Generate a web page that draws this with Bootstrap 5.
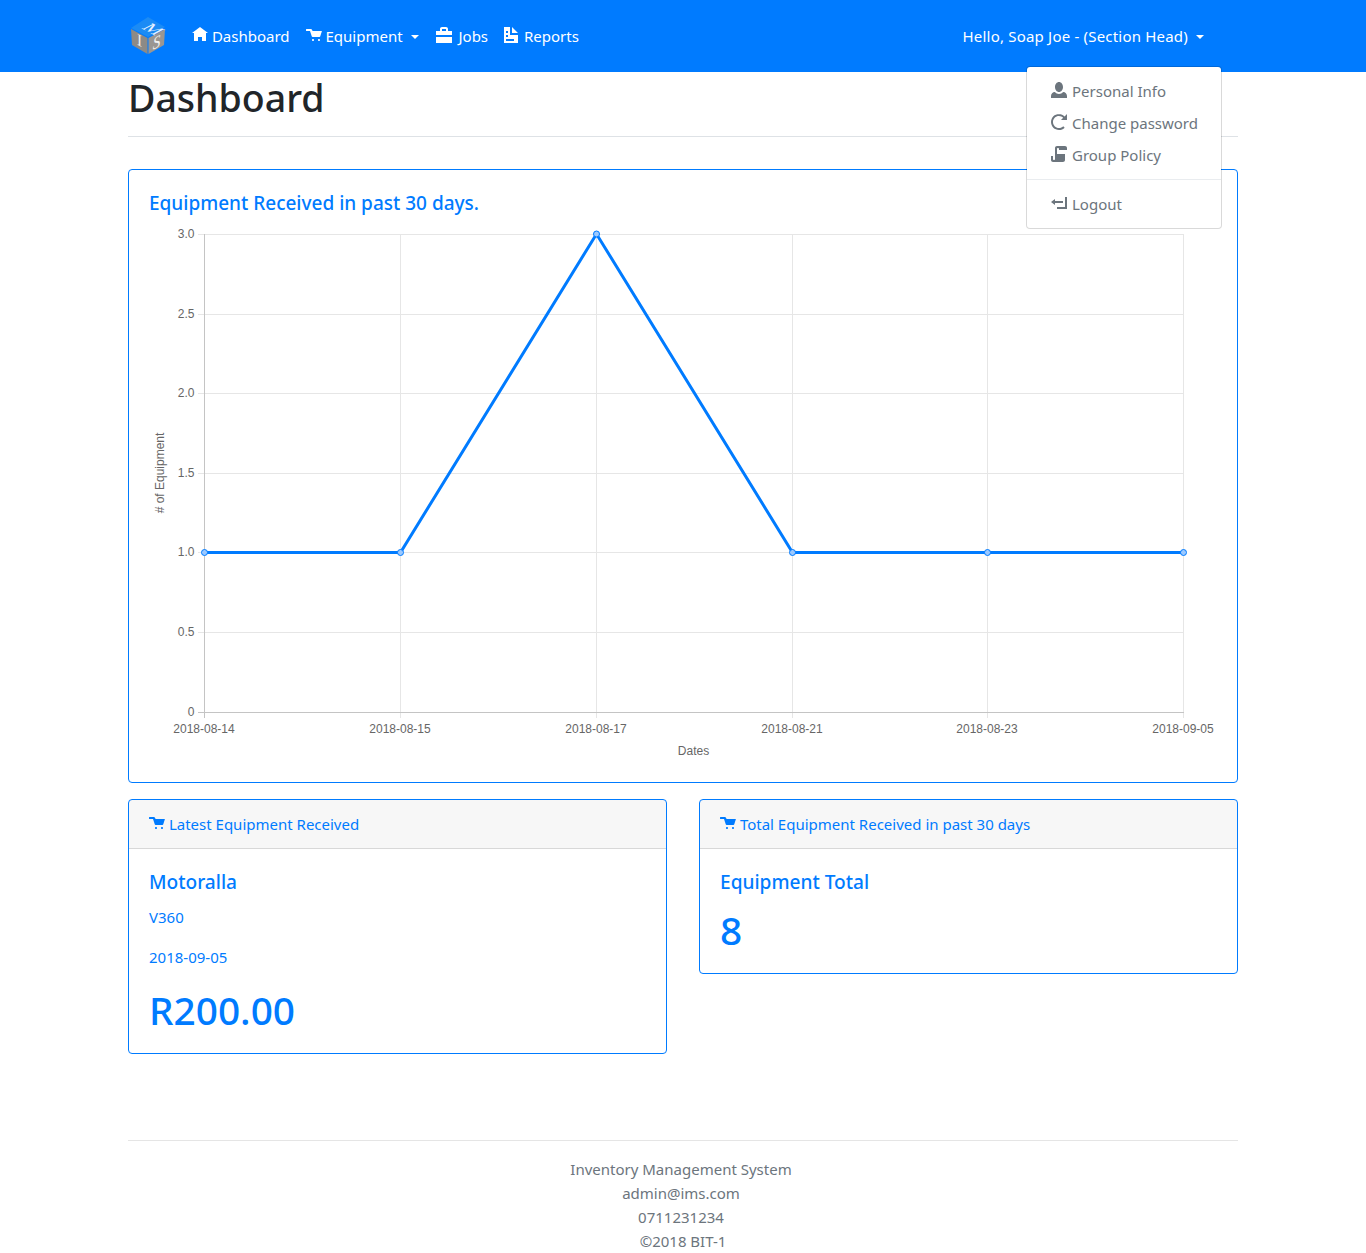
<!DOCTYPE html>
<html lang="en">
<head>
<meta charset="utf-8">
<title>Dashboard</title>
<link href="https://cdn.jsdelivr.net/npm/bootstrap@5.3.0/dist/css/bootstrap.min.css" rel="stylesheet">
<style>
:root{--ims-blue:#007bff;}
body{font-family:"Noto Sans","Open Sans",sans-serif;font-size:15px;line-height:24px;color:#212529;}
.shell{--bs-gutter-x:30px;}
.shell .row{--bs-gutter-x:32px;}
.topbar{background:var(--ims-blue);height:72px;padding:0;}
.topbar .nav-link{color:#fff;padding:8px;white-space:nowrap;font-size:15px;line-height:24px;}
.topbar .nav-link:hover,.topbar .nav-link:focus,.topbar .nav-link.show{color:#fff;}
.topbar .dropdown-toggle::after{font-size:16px;margin-left:8px;margin-right:1px;vertical-align:3px;}
.user-nav{margin-right:25px;}
.user-nav .nav-link{letter-spacing:.2px;}
.brand-box{width:40px;height:40px;margin-right:16px;display:block;}
.ico{width:16px;height:16px;fill:currentColor;vertical-align:-1px;}
.ico-cart{vertical-align:-3px;}
.ico-jobs{margin-right:3px;}
.user-menu{position:absolute;top:50px;right:-9px;left:auto;min-width:0;margin:0;padding:8px 0;border-radius:4px;border-color:rgba(0,0,0,.15);display:block;font-size:15px;letter-spacing:0;}
.user-menu .dropdown-item{color:#6c757d;padding:4px 23px 4px 24px;line-height:24px;}
.user-menu .ico{margin-right:1px;}
.user-menu .dropdown-divider{margin:8px 0;border-color:#e9ecef;opacity:1;}
.page-head{margin-top:2px;padding-bottom:14px;border-bottom:1px solid #dee2e6;margin-bottom:32px;}
.page-head h1{font-size:37.5px;font-weight:500;line-height:48px;margin:0;}
.blue-card{border:1px solid var(--ims-blue);border-radius:4px;color:var(--ims-blue);--bs-card-border-radius:4px;--bs-card-inner-border-radius:3px;}
.blue-card .card-body{padding:20px;}
.blue-card .card-header{padding:12px 20px;background:rgba(0,0,0,.03);border-bottom:1px solid rgba(0,0,0,.125);}
.blue-card h5{font-size:19.1px;font-weight:500;line-height:26px;margin:0 0 10px;}
.blue-card h5.chart-title{font-size:19px;margin-bottom:6px;}
.blue-card p{margin:0 0 16px;}
.blue-card h1{font-size:38.8px;font-weight:500;line-height:50px;margin:0 0 -2px;}
.chart-svg{display:block;width:1068px;height:540px;}
.chart-svg text{font-family:"Liberation Sans",Arial,sans-serif;font-size:12px;fill:#666;}
.grid-line{stroke:#e6e6e6;stroke-width:1;}
.axis-line{stroke:#c4c4c4;stroke-width:1;}
.site-foot{margin-top:86px;border-top:1px solid rgba(0,0,0,.1);padding-top:16px;text-align:center;color:#6c757d;}
.site-foot div{padding-right:4px;}
.site-foot div:last-child{padding-right:0;}
</style>
</head>
<body>
<nav class="navbar navbar-expand-lg topbar">
  <div class="container shell">
    <a class="navbar-brand p-0 m-0" href="#">
      <svg class="brand-box" viewBox="128 16 40 40" role="img" aria-label="IMS logo">
        <polygon points="148,17 165,27 148,37 131,28" fill="#1b8bf5"/>
        <polygon points="131,29 147.500,38 147.500,54 132,45" fill="#8d8a86"/>
        <polygon points="165,29 148.500,38 148.500,54 164,45" fill="#9a9692"/>
        <text transform="matrix(.8 .42 -.8 .42 148 32)" text-anchor="middle" font-family="Liberation Serif,serif" font-size="20" fill="#e8f2ff">M</text>
        <text transform="matrix(.9 .5 0 1 139.500 46)" text-anchor="middle" font-family="Liberation Serif,serif" font-size="17" fill="#f1f1f1">I</text>
        <text transform="matrix(.9 -.5 0 1 156.500 48)" text-anchor="middle" font-family="Liberation Serif,serif" font-size="17" font-style="italic" fill="#f1f1f1">S</text>
      </svg>
    </a>
    <ul class="navbar-nav flex-row me-auto">
      <li class="nav-item"><a class="nav-link" href="#"><svg class="ico" viewBox="0 0 8 8"><path d="M4 0l-4 3h1v4h2v-2h2v2h2v-4.030l1 .03-4-3z"/></svg> Dashboard</a></li>
      <li class="nav-item"><a class="nav-link dropdown-toggle" href="#"><svg class="ico ico-cart" viewBox="0 0 8 8"><path d="M.34 0a.5.5 0 0 0 .16 1h1.500l.09.25.41 1.250.41 1.250c.04.13.21.25.34.25h3.500c.14 0 .3-.12.34-.25l.81-2.500c.04-.13-.02-.25-.16-.25h-4.440l-.38-.72a.5.5 0 0 0-.44-.28h-2a.5.5 0 0 0-.09 0 .5.5 0 0 0-.06 0zm3.160 5c-.28 0-.5.22-.5.5s.22.5.5.5.5-.22.5-.5-.22-.5-.5-.5zm3 0c-.28 0-.5.22-.5.5s.22.5.5.5.5-.22.5-.5-.22-.5-.5-.5z"/></svg> Equipment</a></li>
      <li class="nav-item"><a class="nav-link" href="#"><svg class="ico ico-jobs" viewBox="0 0 8 8"><path d="M3 0c-.55 0-1 .45-1 1v1h-1.910l-.03.03a1 1 0 0 0-.06.03v1.910h8v-1.910a.5.5 0 0 0-.09-.03l-.03-.03h-1.880v-1c0-.55-.45-1-1-1h-2zm0 1h2v1h-2v-1zm-3 4v3h8v-3h-8z"/></svg> Jobs</a></li>
      <li class="nav-item"><a class="nav-link" href="#"><svg class="ico" viewBox="0 0 8 8"><path d="M0 0v8h7v-4h-4v-4h-3zm4 0v3h3l-3-3zm-3 2h1v1h-1v-1zm0 2h1v1h-1v-1zm0 2h4v1h-4v-1z"/></svg> Reports</a></li>
    </ul>
    <ul class="navbar-nav flex-row user-nav">
      <li class="nav-item dropdown position-relative">
        <a class="nav-link dropdown-toggle show" href="#">Hello, Soap Joe - (Section Head)</a>
        <div class="dropdown-menu show user-menu">
          <a class="dropdown-item" href="#"><svg class="ico" viewBox="0 0 8 8"><path d="M4 0c-1.100 0-2 1.120-2 2.500s.9 2.500 2 2.500 2-1.120 2-2.500-.9-2.500-2-2.500zm-2.090 5c-1.060.05-1.910.92-1.910 2v1h8v-1c0-1.080-.84-1.950-1.910-2-.54.61-1.280 1-2.090 1-.81 0-1.550-.39-2.090-1z"/></svg> Personal Info</a>
          <a class="dropdown-item" href="#"><svg class="ico" viewBox="0 0 8 8"><path d="M4 0c-2.200 0-4 1.800-4 4s1.800 4 4 4c1.100 0 2.120-.43 2.840-1.160l-.72-.72c-.54.54-1.290.88-2.130.88-1.660 0-3-1.340-3-3s1.340-3 3-3c.83 0 1.550.36 2.090.91l-1.090 1.090h3v-3l-1.190 1.190c-.72-.72-1.710-1.190-2.810-1.190z"/></svg> Change password</a>
          <a class="dropdown-item" href="#"><svg class="ico" viewBox="0 0 8 8"><path d="M3 0c-.55 0-1 .45-1 1v5.500c0 .28-.22.5-.5.5s-.5-.22-.5-.5v-1.500h-1v2c0 .55.45 1 1 1h5c.55 0 1-.45 1-1v-3h-4v-2.500c0-.28.22-.5.5-.5s.5.22.5.5v.5h4v-1c0-.55-.45-1-1-1h-4z"/></svg> Group Policy</a>
          <div class="dropdown-divider"></div>
          <a class="dropdown-item" href="#"><svg class="ico" viewBox="0 0 8 8"><path d="M3 0v1h4v5h-4v1h5v-6h-5zm-1 2l-2 1.500 2 1.500v-1h4v-1h-4v-1z"/></svg> Logout</a>
        </div>
      </li>
    </ul>
  </div>
</nav>

<main class="container shell">
  <div class="page-head"><h1>Dashboard</h1></div>

  <div class="card blue-card mb-3">
    <div class="card-body">
      <h5 class="chart-title">Equipment Received in past 30 days.</h5>
      <svg class="chart-svg" viewBox="149 222 1068 540" role="img" aria-label="Line chart of equipment received">
        <g class="grids">
          <line class="grid-line" x1="198" x2="1184" y1="234.500" y2="234.500"/>
          <line class="grid-line" x1="198" x2="1184" y1="314.500" y2="314.500"/>
          <line class="grid-line" x1="198" x2="1184" y1="393.500" y2="393.500"/>
          <line class="grid-line" x1="198" x2="1184" y1="473.500" y2="473.500"/>
          <line class="grid-line" x1="198" x2="1184" y1="552.500" y2="552.500"/>
          <line class="grid-line" x1="198" x2="1184" y1="632.500" y2="632.500"/>
          <line class="grid-line" x1="400.500" x2="400.500" y1="234" y2="718"/>
          <line class="grid-line" x1="596.500" x2="596.500" y1="234" y2="718"/>
          <line class="grid-line" x1="792.500" x2="792.500" y1="234" y2="718"/>
          <line class="grid-line" x1="987.500" x2="987.500" y1="234" y2="718"/>
          <line class="grid-line" x1="1183.500" x2="1183.500" y1="234" y2="718"/>
          <line class="axis-line" x1="204.500" x2="204.500" y1="234" y2="718"/>
          <line class="axis-line" x1="198" x2="1184" y1="712.500" y2="712.500"/>
        </g>
        <g text-anchor="end">
          <text x="194.500" y="238">3.0</text><text x="194.500" y="318">2.5</text><text x="194.500" y="397">2.0</text>
          <text x="194.500" y="477">1.5</text><text x="194.500" y="556">1.0</text><text x="194.500" y="636">0.5</text><text x="194.500" y="716">0</text>
        </g>
        <g text-anchor="middle">
          <text x="204" y="733">2018-08-14</text><text x="400" y="733">2018-08-15</text><text x="596" y="733">2018-08-17</text>
          <text x="792" y="733">2018-08-21</text><text x="987" y="733">2018-08-23</text><text x="1183" y="733">2018-09-05</text>
          <text x="693.500" y="755">Dates</text>
          <text transform="translate(164 473) rotate(-90)"># of Equipment</text>
        </g>
        <polyline points="204.500,552.500 400.500,552.500 596.500,234 792.500,552.500 987.500,552.500 1183.500,552.500" fill="none" stroke="#007bff" stroke-width="3"/>
        <g fill="#9cc9ff" stroke="#007bff" stroke-width="1">
          <circle cx="204.500" cy="552.500" r="3"/><circle cx="400.500" cy="552.500" r="3"/><circle cx="596.500" cy="234" r="3"/>
          <circle cx="792.500" cy="552.500" r="3"/><circle cx="987.500" cy="552.500" r="3"/><circle cx="1183.500" cy="552.500" r="3"/>
        </g>
      </svg>
    </div>
  </div>

  <div class="row align-items-start">
    <div class="col-6">
      <div class="card blue-card">
        <div class="card-header"><svg class="ico ico-cart" viewBox="0 0 8 8"><path d="M.34 0a.5.5 0 0 0 .16 1h1.500l.09.25.41 1.250.41 1.250c.04.13.21.25.34.25h3.500c.14 0 .3-.12.34-.25l.81-2.500c.04-.13-.02-.25-.16-.25h-4.440l-.38-.72a.5.5 0 0 0-.44-.28h-2a.5.5 0 0 0-.09 0 .5.5 0 0 0-.06 0zm3.160 5c-.28 0-.5.22-.5.5s.22.5.5.5.5-.22.5-.5-.22-.5-.5-.5zm3 0c-.28 0-.5.22-.5.5s.22.5.5.5.5-.22.5-.5-.22-.5-.5-.5z"/></svg> Latest Equipment Received</div>
        <div class="card-body">
          <h5>Motoralla</h5>
          <p>V360</p>
          <p>2018-09-05</p>
          <h1>R200.00</h1>
        </div>
      </div>
    </div>
    <div class="col-6">
      <div class="card blue-card">
        <div class="card-header"><svg class="ico ico-cart" viewBox="0 0 8 8"><path d="M.34 0a.5.5 0 0 0 .16 1h1.500l.09.25.41 1.250.41 1.250c.04.13.21.25.34.25h3.500c.14 0 .3-.12.34-.25l.81-2.500c.04-.13-.02-.25-.16-.25h-4.440l-.38-.72a.5.5 0 0 0-.44-.28h-2a.5.5 0 0 0-.09 0 .5.5 0 0 0-.06 0zm3.160 5c-.28 0-.5.22-.5.5s.22.5.5.5.5-.22.5-.5-.22-.5-.5-.5zm3 0c-.28 0-.5.22-.5.5s.22.5.5.5.5-.22.5-.5-.22-.5-.5-.5z"/></svg> Total Equipment Received in past 30 days</div>
        <div class="card-body">
          <h5>Equipment Total</h5>
          <h1>8</h1>
        </div>
      </div>
    </div>
  </div>

  <footer class="site-foot">
    <div>Inventory Management System</div>
    <div>admin@ims.com</div>
    <div>0711231234</div>
    <div>©2018 BIT-1</div>
  </footer>
</main>
</body>
</html>
